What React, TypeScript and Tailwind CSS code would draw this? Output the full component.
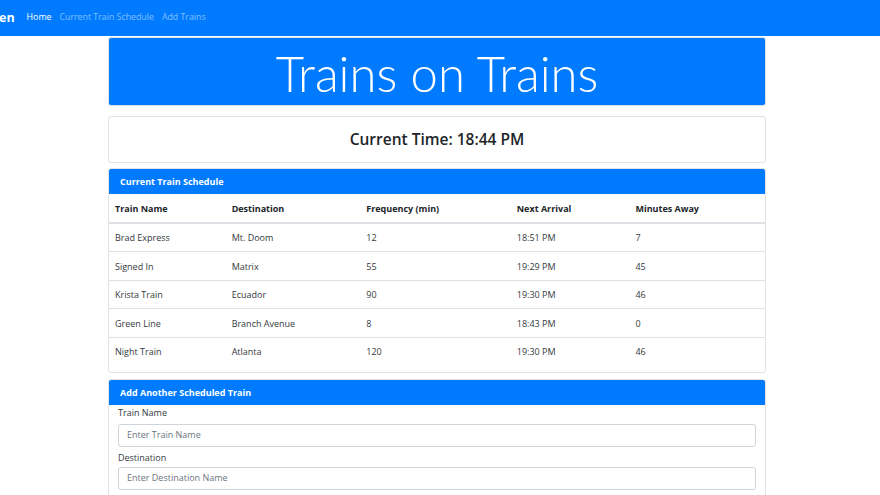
import React from "react";

const rows = [
  ["Brad Express", "Mt. Doom", "12", "18:51 PM", "7"],
  ["Signed In", "Matrix", "55", "19:29 PM", "45"],
  ["Krista Train", "Ecuador", "90", "19:30 PM", "46"],
  ["Green Line", "Branch Avenue", "8", "18:43 PM", "0"],
  ["Night Train", "Atlanta", "120", "19:30 PM", "46"],
];

const colW = ["w-[117px]", "w-[135px]", "w-[151px]", "w-[119px]", "w-[136px]"];

export default function App() {
  return (
    <div
      className="w-[880px] h-[495px] overflow-hidden bg-white text-[#212529]"
      style={{ fontFamily: '"Open Sans", "Noto Sans", sans-serif' }}
    >
      <nav className="h-[36px] bg-[#007bff] flex items-center">
        <span className="text-white font-bold text-[12.5px] ml-[-1px] mr-[12px]">en</span>
        <div className="flex gap-[8px] text-[8.8px]">
          <span className="text-white">Home</span>
          <span className="text-white/50">Current Train Schedule</span>
          <span className="text-white/50">Add Trains</span>
        </div>
      </nav>
      <div className="w-[658px] ml-[108px] flex flex-col">
        <div className="mt-[1px] h-[69px] bg-[#007bff] border border-[#dfe3e8] rounded-[3px] flex items-center justify-center">
          <h1
            className="text-white font-light text-[49px] leading-none pt-[3px]"
            style={{ fontFamily: 'Lato, "Open Sans", sans-serif' }}
          >
            Trains on Trains
          </h1>
        </div>
        <div className="mt-[10px] h-[47px] border border-[#e3e3e3] rounded-[3px] flex items-center justify-center">
          <h2 className="text-[15.5px] font-semibold text-[#212529] pt-[1px]">Current Time: 18:44 PM</h2>
        </div>
        <div className="mt-[5px] border border-[#e3e3e3] rounded-[3px] overflow-hidden">
          <div className="h-[25px] bg-[#007bff] flex items-center px-[11px] text-white font-bold text-[9px] pt-[1px]">
            Current Train Schedule
          </div>
          <table className="w-full text-[9px] border-collapse">
            <thead>
              <tr className="h-[29px] border-b-2 border-[#dee2e6]">
                {["Train Name", "Destination", "Frequency (min)", "Next Arrival", "Minutes Away"].map((h, i) => (
                  <th key={h} className={`${colW[i]} text-left font-bold px-[6px] align-middle pt-[2px]`}>{h}</th>
                ))}
              </tr>
            </thead>
            <tbody>
              {rows.map((r, ri) => (
                <tr key={ri} className={`h-[28.5px] ${ri > 0 ? "border-t border-[#dee2e6]" : ""}`}>
                  {r.map((c, i) => (
                    <td key={i} className="px-[6px] text-[#343a40] align-middle pt-[1px]">{c}</td>
                  ))}
                </tr>
              ))}
            </tbody>
          </table>
          <div className="h-[6px]" />
        </div>
        <div className="mt-[6px] border border-[#e3e3e3] rounded-[3px] overflow-hidden">
          <div className="h-[25px] bg-[#007bff] flex items-center px-[11px] text-white font-bold text-[9px] pt-[1px]">
            Add Another Scheduled Train
          </div>
          <div className="px-[9px] pt-[1px] pb-[10px] text-[9px]">
            <label className="block h-[18px] leading-[14px] text-[#343a40]">Train Name</label>
            <div className="h-[23px] border border-[#ced4da] rounded-[3px] flex items-center px-[8px] text-[#6c757d]">
              Enter Train Name
            </div>
            <label className="block mt-[2px] h-[18px] leading-[17px] text-[#343a40]">Destination</label>
            <div className="h-[23px] border border-[#ced4da] rounded-[3px] flex items-center px-[8px] text-[#6c757d]">
              Enter Destination Name
            </div>
            <label className="block mt-[2px] h-[18px] leading-[17px] text-[#343a40]">First Train Time</label>
          </div>
        </div>
      </div>
    </div>
  );
}
